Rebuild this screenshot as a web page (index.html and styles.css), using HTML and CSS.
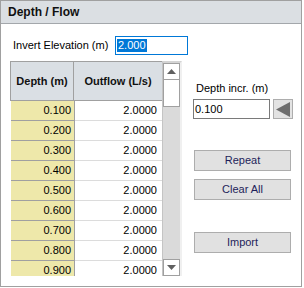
FILE: index.html
```html
<!DOCTYPE html>
<html lang="en">
<head>
    <meta charset="UTF-8">
    <title>Depth / Flow</title>
    <link rel="stylesheet" href="styles.css">
</head>
<body>
    <div class="panel">
        <div class="panel-title">Depth / Flow</div>
        <div class="panel-body">
            <div class="left">
                <div class="field-row">
                    <span class="label">Invert Elevation (m)</span>
                    <div class="textbox focused"><span class="selected">2.000</span></div>
                </div>
                <div class="grid-wrap">
                    <div class="grid">
                        <div class="grid-head">
                            <div class="hc depth">Depth (m)</div>
                            <div class="hc flow">Outflow (L/s)</div>
                        </div>
                        <div class="grid-row"><div class="cell depth">0.100</div><div class="cell flow">2.0000</div></div>
                        <div class="grid-row"><div class="cell depth">0.200</div><div class="cell flow">2.0000</div></div>
                        <div class="grid-row"><div class="cell depth">0.300</div><div class="cell flow">2.0000</div></div>
                        <div class="grid-row"><div class="cell depth">0.400</div><div class="cell flow">2.0000</div></div>
                        <div class="grid-row"><div class="cell depth">0.500</div><div class="cell flow">2.0000</div></div>
                        <div class="grid-row"><div class="cell depth">0.600</div><div class="cell flow">2.0000</div></div>
                        <div class="grid-row"><div class="cell depth">0.700</div><div class="cell flow">2.0000</div></div>
                        <div class="grid-row"><div class="cell depth">0.800</div><div class="cell flow">2.0000</div></div>
                        <div class="grid-row"><div class="cell depth">0.900</div><div class="cell flow">2.0000</div></div>
                    </div>
                    <div class="scrollbar">
                        <div class="sb-btn up">
                            <svg width="9" height="5" viewBox="0 0 9 5"><polygon points="0,5 9,5 4.5,0" fill="#606060"/></svg>
                        </div>
                        <div class="sb-thumb"></div>
                        <div class="sb-track"></div>
                        <div class="sb-btn down">
                            <svg width="9" height="5" viewBox="0 0 9 5"><polygon points="0,0 9,0 4.5,5" fill="#606060"/></svg>
                        </div>
                    </div>
                </div>
            </div>
            <div class="right">
                <div class="label incr-label">Depth incr. (m)</div>
                <div class="incr-row">
                    <div class="textbox incr">0.100</div>
                    <div class="arrow-btn">
                        <svg width="14" height="15" viewBox="0 0 14 15"><polygon points="0,7.5 14,0 14,15" fill="#6e6e6e"/></svg>
                    </div>
                </div>
                <div class="btn repeat">Repeat</div>
                <div class="btn clear">Clear All</div>
                <div class="btn import">Import</div>
            </div>
        </div>
    </div>
</body>
</html>
```

FILE: styles.css
```css
body {
    margin: 0;
    padding: 0;
    background-color: #ffffff;
    font-family: "Liberation Sans", Arial, sans-serif;
    font-size: 11px;
    color: #000000;
}
.panel {
    width: 302px;
    height: 287px;
    box-sizing: border-box;
    border: 1px solid #a0a0a0;
    background-color: #ffffff;
}
.panel-title {
    height: 22px;
    line-height: 22px;
    padding-left: 7px;
    background-color: #dbdfe3;
    border-bottom: 1px solid #a3a7ab;
    font-size: 12px;
    font-weight: bold;
    color: #111111;
}
.panel-body {
    display: flex;
    padding: 12px 0 0 9px;
}
.field-row {
    display: flex;
    align-items: center;
    height: 19px;
}
.label {
    line-height: 13px;
}
.field-row .label {
    width: 102px;
    padding-left: 3px;
}
.textbox {
    box-sizing: border-box;
    height: 19px;
    border: 1px solid #7a7a7a;
    background-color: #ffffff;
    line-height: 17px;
    padding-left: 1px;
}
.textbox.focused {
    width: 73px;
    border-color: #0078d7;
}
.selected {
    display: inline-block;
    line-height: 13px;
    padding: 0 1px;
    background-color: #0078d7;
    color: #ffffff;
}
.grid-wrap {
    display: flex;
    margin-top: 6px;
    height: 215px;
}
.grid {
    width: 152px;
    overflow: hidden;
}
.grid-head {
    display: flex;
    height: 40px;
    box-sizing: border-box;
    border-top: 1px solid #a0a0a0;
    border-left: 1px solid #a0a0a0;
    border-bottom: 1px solid #a0a0a0;
    background-color: #dadfe4;
}
.hc {
    display: flex;
    align-items: center;
    justify-content: center;
    font-weight: bold;
    color: #111111;
}
.hc.depth {
    width: 62px;
    border-right: 1px solid #a0a0a0;
}
.hc.flow {
    flex: 1;
}
.grid-row {
    display: flex;
    height: 20px;
}
.cell {
    box-sizing: border-box;
    height: 20px;
    line-height: 19px;
    text-align: right;
}
.cell.depth {
    width: 64px;
    margin-left: 1px;
    padding-right: 3px;
    background-color: #eee8aa;
    border-bottom: 1px solid #a0a0a0;
    border-right: 1px solid #a0a0a0;
}
.cell.flow {
    width: 87px;
    padding-right: 5px;
    border-bottom: 1px solid #dcdcdc;
}
.scrollbar {
    display: flex;
    flex-direction: column;
    width: 20px;
    box-sizing: border-box;
    border-top: 2px solid #d4d4d4;
    border-left: 1px solid #c4c4c4;
    border-right: 2px solid #f0f0f0;
    background-color: #dadada;
}
.sb-btn {
    display: flex;
    align-items: center;
    justify-content: center;
    height: 17px;
    box-sizing: border-box;
    border: 1px solid #a0a0a0;
    background-color: #ffffff;
}
.sb-thumb {
    height: 27px;
    box-sizing: border-box;
    border: 1px solid #a0a0a0;
    border-top: none;
    background-color: #ffffff;
}
.sb-track {
    flex: 1;
}
.right {
    margin-left: 5px;
    width: 100px;
}
.incr-label {
    margin-top: 46px;
    padding-left: 3px;
}
.incr-row {
    display: flex;
    margin-top: 4px;
}
.textbox.incr {
    width: 77px;
    height: 20px;
    line-height: 18px;
}
.arrow-btn {
    display: flex;
    align-items: center;
    justify-content: center;
    width: 20px;
    height: 20px;
    margin-left: 3px;
    box-sizing: border-box;
    border: 1px solid #adadad;
    background-color: #e3e3e3;
}
.btn {
    width: 97px;
    height: 21px;
    margin-left: 1px;
    box-sizing: border-box;
    border: 1px solid #adadad;
    background-color: #e1e1e1;
    text-align: center;
    line-height: 19px;
    color: #1e1e5a;
}
.btn.repeat {
    margin-top: 31px;
}
.btn.clear {
    margin-top: 8px;
}
.btn.import {
    margin-top: 32px;
}
```
